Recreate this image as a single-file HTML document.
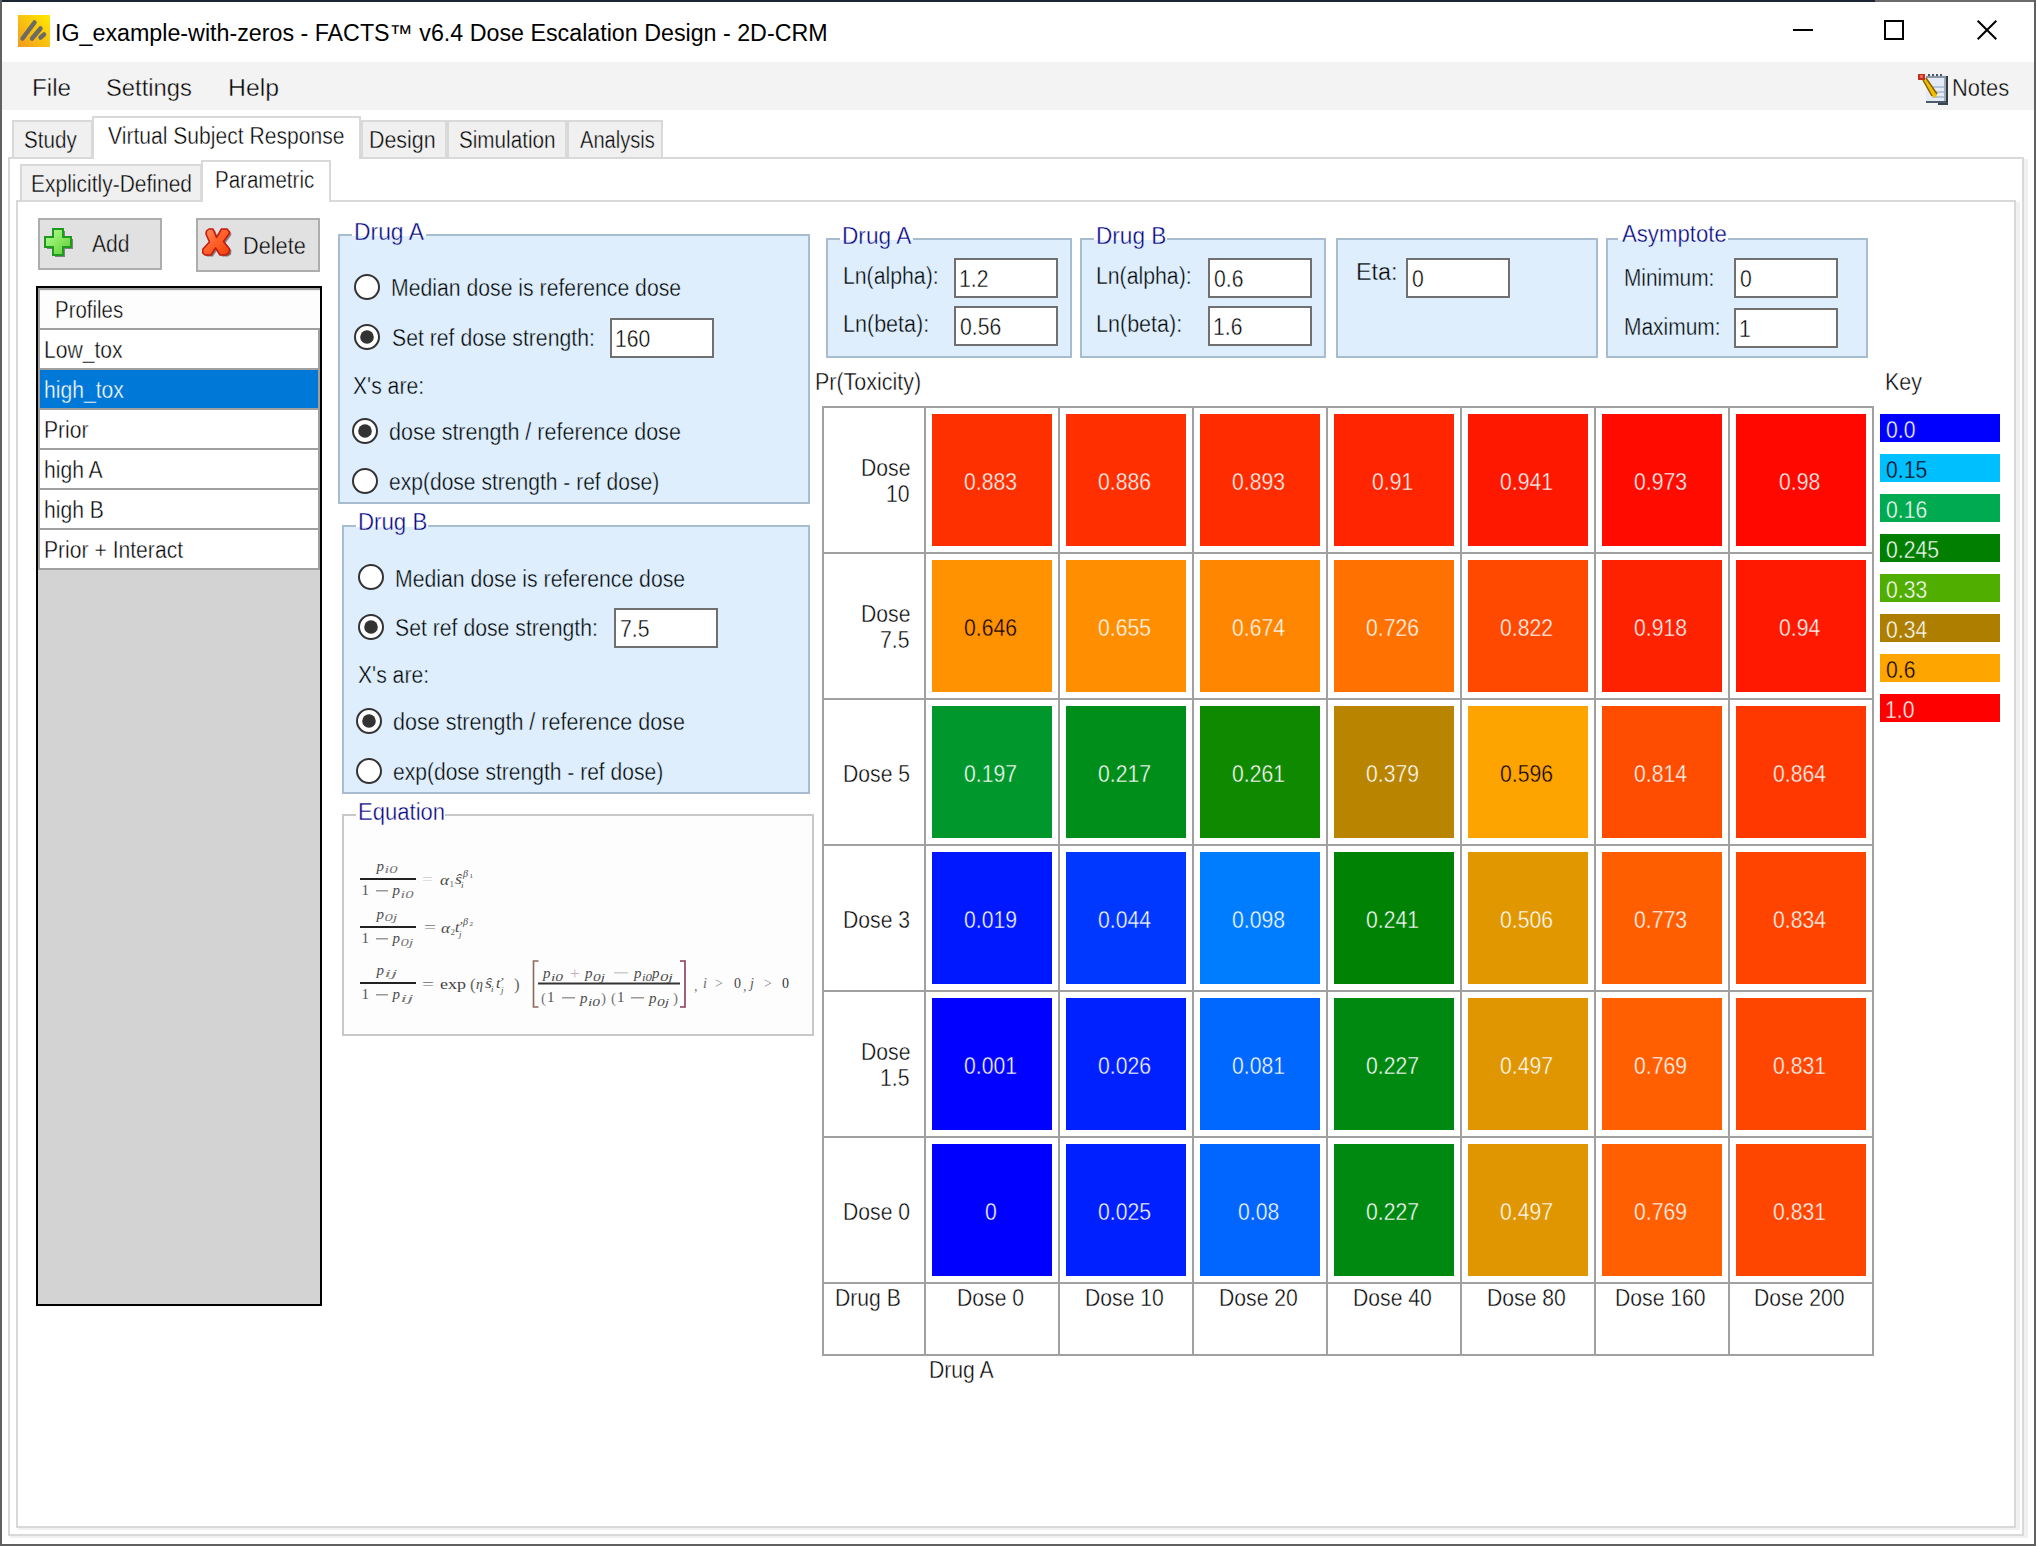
<!DOCTYPE html>
<html><head><meta charset="utf-8"><style>
html,body{margin:0;padding:0;}
body{width:2036px;height:1546px;position:relative;overflow:hidden;background:#fff;font-family:"Liberation Sans",sans-serif;}
.a{position:absolute;}
.t{position:absolute;white-space:pre;transform-origin:0 0;color:#000;}
</style></head><body>
<div class='a' style='left:0px;top:0px;width:2036px;height:2px;background:#1c2534;'></div>
<div class='a' style='left:1875px;top:0px;width:161px;height:2px;background:#6b6b6b;'></div>
<div class='a' style='left:0px;top:0px;width:2px;height:1546px;background:#606060;'></div>
<div class='a' style='left:2034px;top:0px;width:2px;height:1546px;background:#606060;'></div>
<div class='a' style='left:0px;top:1544px;width:2036px;height:2px;background:#606060;'></div>
<svg class='a' style='left:18px;top:15px' width='32' height='32' viewBox='0 0 32 32'>
<defs><linearGradient id='ig' x1='0' y1='1' x2='1' y2='0'><stop offset='0' stop-color='#f39a1e'/><stop offset='1' stop-color='#ffea00'/></linearGradient></defs>
<rect width='32' height='32' fill='url(#ig)'/>
<g stroke='#6b6b62' stroke-width='4.5' stroke-linecap='round'><line x1='4.5' y1='23.5' x2='16.5' y2='7.5'/><line x1='14' y1='23.5' x2='22.5' y2='13.5'/><line x1='22.5' y1='22.5' x2='26' y2='19.5'/></g>
</svg>
<div class='t' style='left:54.56px;top:22px;font-size:23px;line-height:23px;transform:scaleX(1.0108);-webkit-text-stroke:0.4px #fff;-webkit-text-stroke:0;'>IG_example-with-zeros - FACTS™ v6.4 Dose Escalation Design - 2D-CRM</div>
<div class='a' style='left:1793px;top:29px;width:20px;height:2px;background:#000;'></div>
<div class='a' style='left:1884px;top:20px;width:20px;height:20px;border:2px solid #000;box-sizing:border-box;'></div>
<svg class='a' style='left:1976px;top:19px' width='22' height='22' viewBox='0 0 22 22'><g stroke='#000' stroke-width='2'><line x1='1.7' y1='1.7' x2='20.3' y2='20.3'/><line x1='20.3' y1='1.7' x2='1.7' y2='20.3'/></g></svg>
<div class='a' style='left:2px;top:62px;width:2032px;height:48px;background:#f3f3f3;'></div>
<div class='t' style='left:32.01px;top:77px;font-size:23px;line-height:23px;transform:scaleX(1.0533);-webkit-text-stroke:0.4px #f3f3f3;'>File</div>
<div class='t' style='left:106.45px;top:77px;font-size:23px;line-height:23px;transform:scaleX(1.0334);-webkit-text-stroke:0.4px #f3f3f3;'>Settings</div>
<div class='t' style='left:227.96px;top:77px;font-size:23px;line-height:23px;transform:scaleX(1.0791);-webkit-text-stroke:0.4px #f3f3f3;'>Help</div>
<svg class='a' style='left:1916px;top:72px' width='34' height='36' viewBox='0 0 34 36'>
<rect x='10' y='3' width='20' height='28' fill='#e4ebf6'/>
<rect x='30' y='4' width='2' height='28' fill='#2e3a44'/>
<rect x='28' y='4' width='2' height='28' fill='#a0aab4'/>
<rect x='22' y='30' width='10' height='3' fill='#3a4650'/>
<rect x='10' y='29' width='20' height='2' fill='#4a5a66'/>
<g fill='#4a5560'><rect x='12' y='2' width='2' height='3'/><rect x='16' y='2' width='2' height='3'/><rect x='20' y='2' width='2' height='3'/><rect x='24' y='2' width='2' height='3'/></g>
<rect x='10' y='4' width='20' height='2' fill='#8a96a2'/>
<g fill='#b4c4dc'><rect x='16' y='14' width='12' height='2'/><rect x='16' y='19' width='12' height='2'/><rect x='16' y='24' width='12' height='2'/></g>
<path d='M7 8L10 6L21 22L20 26L16 24Z' fill='#f0c000'/>
<path d='M10 6L21 22' stroke='#8a6000' stroke-width='1.5'/>
<path d='M7 8L16 24' stroke='#8a6000' stroke-width='1.5'/>
<rect x='2' y='2' width='7' height='6' fill='#c03020' transform='rotate(0)'/>
<rect x='4' y='3' width='3' height='3' fill='#ff6050'/>
</svg>
<div class='t' style='left:1952.20px;top:77px;font-size:23px;line-height:23px;transform:scaleX(0.9518);-webkit-text-stroke:0.4px #f3f3f3;'>Notes</div>
<div class='a' style='left:8px;top:157px;width:2016px;height:1379px;background:#fff;border:2px solid #d9d9d9;box-sizing:border-box;'></div>
<div class='a' style='left:2024px;top:159px;width:4px;height:1379px;background:#f0f0f0;'></div>
<div class='a' style='left:10px;top:1536px;width:2018px;height:2px;background:#f0f0f0;'></div>
<div class='a' style='left:12px;top:120px;width:81px;height:39px;background:#f0f0f0;border:2px solid #d9d9d9;box-sizing:border-box;'></div>
<div class='t' style='left:24.09px;top:128.5px;font-size:23px;line-height:23px;transform:scaleX(0.8966);-webkit-text-stroke:0.4px #f0f0f0;'>Study</div>
<div class='a' style='left:361px;top:120px;width:86px;height:39px;background:#f0f0f0;border:2px solid #d9d9d9;box-sizing:border-box;'></div>
<div class='t' style='left:368.94px;top:128.5px;font-size:23px;line-height:23px;transform:scaleX(0.9308);-webkit-text-stroke:0.4px #f0f0f0;'>Design</div>
<div class='a' style='left:447px;top:120px;width:120px;height:39px;background:#f0f0f0;border:2px solid #d9d9d9;box-sizing:border-box;'></div>
<div class='t' style='left:459.29px;top:128.5px;font-size:23px;line-height:23px;transform:scaleX(0.8982);-webkit-text-stroke:0.4px #f0f0f0;'>Simulation</div>
<div class='a' style='left:567px;top:120px;width:96px;height:39px;background:#f0f0f0;border:2px solid #d9d9d9;box-sizing:border-box;'></div>
<div class='t' style='left:580.46px;top:128.5px;font-size:23px;line-height:23px;transform:scaleX(0.8729);-webkit-text-stroke:0.4px #f0f0f0;'>Analysis</div>
<div class='a' style='left:92px;top:116px;width:269px;height:43px;background:#fff;border:2px solid #d9d9d9;box-sizing:border-box;border-bottom:none;'></div>
<div class='t' style='left:108.42px;top:124.5px;font-size:23px;line-height:23px;transform:scaleX(0.9173);-webkit-text-stroke:0.4px #fff;'>Virtual Subject Response</div>
<div class='a' style='left:16px;top:200px;width:2000px;height:1328px;background:#fff;border:2px solid #d9d9d9;box-sizing:border-box;'></div>
<div class='a' style='left:2016px;top:202px;width:4px;height:1328px;background:#f0f0f0;'></div>
<div class='a' style='left:18px;top:1528px;width:2002px;height:2px;background:#f0f0f0;'></div>
<div class='a' style='left:20px;top:164px;width:182px;height:38px;background:#f0f0f0;border:2px solid #d9d9d9;box-sizing:border-box;'></div>
<div class='t' style='left:30.68px;top:173px;font-size:23px;line-height:23px;transform:scaleX(0.9130);-webkit-text-stroke:0.4px #f0f0f0;'>Explicitly-Defined</div>
<div class='a' style='left:201px;top:160px;width:130px;height:42px;background:#fff;border:2px solid #d9d9d9;box-sizing:border-box;border-bottom:none;'></div>
<div class='t' style='left:215.32px;top:169px;font-size:23px;line-height:23px;transform:scaleX(0.8924);-webkit-text-stroke:0.4px #fff;'>Parametric</div>
<div class='a' style='left:38px;top:218px;width:124px;height:52px;background:#e1e1e1;border:2px solid #adadad;box-sizing:border-box;'></div>
<svg class='a' style='left:43px;top:227px' width='34' height='34' viewBox='0 0 34 34'>
<defs><linearGradient id='gp' x1='0' y1='0' x2='1' y2='1'><stop offset='0' stop-color='#b8ff98'/><stop offset='0.5' stop-color='#88e860'/><stop offset='1' stop-color='#60c838'/></linearGradient></defs>
<path d='M12 4h10v8h8v10h-8v8h-10v-8h-8v-10h8z' fill='#606060' opacity='0.75'/>
<path d='M10 2h10v8h8v10h-8v8h-10v-8h-8v-10h8z' fill='url(#gp)' stroke='#1e9a1e' stroke-width='2'/>
</svg>
<div class='t' style='left:92.36px;top:233px;font-size:23px;line-height:23px;transform:scaleX(0.9183);-webkit-text-stroke:0.4px #e1e1e1;'>Add</div>
<div class='a' style='left:196px;top:218px;width:124px;height:54px;background:#e1e1e1;border:2px solid #adadad;box-sizing:border-box;'></div>
<svg class='a' style='left:202px;top:228px' width='32' height='32' viewBox='0 0 32 32'>
<defs><linearGradient id='gx' x1='0' y1='0' x2='1' y2='1'><stop offset='0' stop-color='#ff9060'/><stop offset='0.5' stop-color='#ff6028'/><stop offset='1' stop-color='#f04008'/></linearGradient></defs>
<path d='M4.5 3L7 1L11 1L14.5 9.5L19.5 1L25 1L27.5 4L27 6L21.5 13.5L27.5 21L27 25L24 27L18 27L13.5 20L9 27L3 27L0.5 24.5L1 21L7.5 14L4 6Z' fill='#555' opacity='0.7' transform='translate(2,1.5)'/>
<path d='M4.5 3L7 1L11 1L14.5 9.5L19.5 1L25 1L27.5 4L27 6L21.5 13.5L27.5 21L27 25L24 27L18 27L13.5 20L9 27L3 27L0.5 24.5L1 21L7.5 14L4 6Z' fill='url(#gx)' stroke='#c41a10' stroke-width='1.6' stroke-linejoin='round'/>
</svg>
<div class='t' style='left:242.72px;top:235px;font-size:23px;line-height:23px;transform:scaleX(0.9438);-webkit-text-stroke:0.4px #e1e1e1;'>Delete</div>
<div class='a' style='left:36px;top:286px;width:286px;height:1020px;background:#d3d3d3;border:2px solid #000;box-sizing:border-box;'></div>
<div class='a' style='left:38px;top:288px;width:282px;height:2px;background:#a0a0a0;'></div>
<div class='a' style='left:38px;top:288px;width:2px;height:282px;background:#a0a0a0;'></div>
<div class='a' style='left:40px;top:290px;width:280px;height:38px;background:#fdfdfd;'></div>
<div class='a' style='left:40px;top:290px;width:280px;height:1px;background:#f0f0f0;'></div>
<div class='t' style='left:55.32px;top:299px;font-size:23px;line-height:23px;transform:scaleX(0.8882);-webkit-text-stroke:0.4px #fdfdfd;'>Profiles</div>
<div class='a' style='left:40px;top:328px;width:280px;height:2px;background:#a0a0a0;'></div>
<div class='a' style='left:40px;top:330px;width:278px;height:38px;background:#fff;'></div>
<div class='a' style='left:318px;top:330px;width:2px;height:38px;background:#a0a0a0;'></div>
<div class='t' style='left:44.17px;top:339px;font-size:23px;line-height:23px;transform:scaleX(0.9180);-webkit-text-stroke:0.4px #fff;'>Low_tox</div>
<div class='a' style='left:40px;top:368px;width:280px;height:2px;background:#a0a0a0;'></div>
<div class='a' style='left:40px;top:370px;width:278px;height:38px;background:#0078d7;'></div>
<div class='a' style='left:318px;top:370px;width:2px;height:38px;background:#a0a0a0;'></div>
<div class='t' style='left:43.66px;top:379px;font-size:23px;line-height:23px;transform:scaleX(0.9180);color:#fff;-webkit-text-stroke:0.4px #0078d7;'>high_tox</div>
<div class='a' style='left:40px;top:408px;width:280px;height:2px;background:#a0a0a0;'></div>
<div class='a' style='left:40px;top:410px;width:278px;height:38px;background:#fff;'></div>
<div class='a' style='left:318px;top:410px;width:2px;height:38px;background:#a0a0a0;'></div>
<div class='t' style='left:44.17px;top:419px;font-size:23px;line-height:23px;transform:scaleX(0.9180);-webkit-text-stroke:0.4px #fff;'>Prior</div>
<div class='a' style='left:40px;top:448px;width:280px;height:2px;background:#a0a0a0;'></div>
<div class='a' style='left:40px;top:450px;width:278px;height:38px;background:#fff;'></div>
<div class='a' style='left:318px;top:450px;width:2px;height:38px;background:#a0a0a0;'></div>
<div class='t' style='left:43.66px;top:459px;font-size:23px;line-height:23px;transform:scaleX(0.9180);-webkit-text-stroke:0.4px #fff;'>high A</div>
<div class='a' style='left:40px;top:488px;width:280px;height:2px;background:#a0a0a0;'></div>
<div class='a' style='left:40px;top:490px;width:278px;height:38px;background:#fff;'></div>
<div class='a' style='left:318px;top:490px;width:2px;height:38px;background:#a0a0a0;'></div>
<div class='t' style='left:43.66px;top:499px;font-size:23px;line-height:23px;transform:scaleX(0.9180);-webkit-text-stroke:0.4px #fff;'>high B</div>
<div class='a' style='left:40px;top:528px;width:280px;height:2px;background:#a0a0a0;'></div>
<div class='a' style='left:40px;top:530px;width:278px;height:38px;background:#fff;'></div>
<div class='a' style='left:318px;top:530px;width:2px;height:38px;background:#a0a0a0;'></div>
<div class='t' style='left:44.17px;top:539px;font-size:23px;line-height:23px;transform:scaleX(0.9180);-webkit-text-stroke:0.4px #fff;'>Prior + Interact</div>
<div class='a' style='left:40px;top:568px;width:280px;height:2px;background:#a0a0a0;'></div>
<div class='a' style='left:338px;top:234px;width:472px;height:270px;background:#dfeefd;border:2px solid #a8bccf;box-sizing:border-box;'></div>
<div class='a' style='left:351.9px;top:234px;width:74.0px;height:2px;background:#fff;'></div>
<div class='a' style='left:351.9px;top:236px;width:74.0px;height:1px;background:#dfeefd;'></div>
<div class='t' style='left:354.03px;top:221px;font-size:23px;line-height:23px;transform:scaleX(0.9941);color:#000080;-webkit-text-stroke:0.4px #f2f8fe;'>Drug A</div>
<svg class='a' style='left:353px;top:273px' width='28' height='28' viewBox='0 0 28 28'><circle cx='14' cy='14' r='12' fill='#fff' stroke='#333' stroke-width='2'/></svg>
<div class='t' style='left:390.86px;top:277px;font-size:23px;line-height:23px;transform:scaleX(0.9223);-webkit-text-stroke:0.4px #dfeefd;'>Median dose is reference dose</div>
<svg class='a' style='left:353px;top:323px' width='28' height='28' viewBox='0 0 28 28'><circle cx='14' cy='14' r='12' fill='#fff' stroke='#333' stroke-width='2'/><circle cx='14' cy='14' r='6.8' fill='#333'/></svg>
<div class='t' style='left:391.67px;top:327px;font-size:23px;line-height:23px;transform:scaleX(0.9223);-webkit-text-stroke:0.4px #dfeefd;'>Set ref dose strength:</div>
<div class='a' style='left:610px;top:318px;width:104px;height:40px;background:#fff;border:2px solid #707070;box-sizing:border-box;'></div>
<div class='t' style='left:615.39px;top:328.0px;font-size:23px;line-height:23px;transform:scaleX(0.9200);-webkit-text-stroke:0.4px #fff;'>160</div>
<div class='t' style='left:353.33px;top:375px;font-size:23px;line-height:23px;transform:scaleX(0.9200);-webkit-text-stroke:0.4px #dfeefd;'>X's are:</div>
<svg class='a' style='left:351px;top:417px' width='28' height='28' viewBox='0 0 28 28'><circle cx='14' cy='14' r='12' fill='#fff' stroke='#333' stroke-width='2'/><circle cx='14' cy='14' r='6.8' fill='#333'/></svg>
<div class='t' style='left:388.80px;top:421px;font-size:23px;line-height:23px;transform:scaleX(0.9355);-webkit-text-stroke:0.4px #dfeefd;'>dose strength / reference dose</div>
<svg class='a' style='left:351px;top:467px' width='28' height='28' viewBox='0 0 28 28'><circle cx='14' cy='14' r='12' fill='#fff' stroke='#333' stroke-width='2'/></svg>
<div class='t' style='left:388.82px;top:471px;font-size:23px;line-height:23px;transform:scaleX(0.9149);-webkit-text-stroke:0.4px #dfeefd;'>exp(dose strength - ref dose)</div>
<div class='a' style='left:342px;top:525px;width:468px;height:269px;background:#dfeefd;border:2px solid #a8bccf;box-sizing:border-box;'></div>
<div class='a' style='left:355.5px;top:525px;width:72.30000000000001px;height:2px;background:#fff;'></div>
<div class='a' style='left:355.5px;top:527px;width:72.30000000000001px;height:1px;background:#dfeefd;'></div>
<div class='t' style='left:357.68px;top:511px;font-size:23px;line-height:23px;transform:scaleX(0.9673);color:#000080;-webkit-text-stroke:0.4px #f2f8fe;'>Drug B</div>
<svg class='a' style='left:356.5px;top:563.4px' width='28' height='28' viewBox='0 0 28 28'><circle cx='14' cy='14' r='12' fill='#fff' stroke='#333' stroke-width='2'/></svg>
<div class='t' style='left:394.56px;top:567.5px;font-size:23px;line-height:23px;transform:scaleX(0.9223);-webkit-text-stroke:0.4px #dfeefd;'>Median dose is reference dose</div>
<svg class='a' style='left:356.5px;top:613px' width='28' height='28' viewBox='0 0 28 28'><circle cx='14' cy='14' r='12' fill='#fff' stroke='#333' stroke-width='2'/><circle cx='14' cy='14' r='6.8' fill='#333'/></svg>
<div class='t' style='left:395.37px;top:617px;font-size:23px;line-height:23px;transform:scaleX(0.9223);-webkit-text-stroke:0.4px #dfeefd;'>Set ref dose strength:</div>
<div class='a' style='left:614px;top:608px;width:104px;height:40px;background:#fff;border:2px solid #707070;box-sizing:border-box;'></div>
<div class='t' style='left:619.94px;top:618.0px;font-size:23px;line-height:23px;transform:scaleX(0.9200);-webkit-text-stroke:0.4px #fff;'>7.5</div>
<div class='t' style='left:357.53px;top:664px;font-size:23px;line-height:23px;transform:scaleX(0.9200);-webkit-text-stroke:0.4px #dfeefd;'>X's are:</div>
<svg class='a' style='left:354.6px;top:706.5px' width='28' height='28' viewBox='0 0 28 28'><circle cx='14' cy='14' r='12' fill='#fff' stroke='#333' stroke-width='2'/><circle cx='14' cy='14' r='6.8' fill='#333'/></svg>
<div class='t' style='left:392.50px;top:711px;font-size:23px;line-height:23px;transform:scaleX(0.9355);-webkit-text-stroke:0.4px #dfeefd;'>dose strength / reference dose</div>
<svg class='a' style='left:354.6px;top:757px' width='28' height='28' viewBox='0 0 28 28'><circle cx='14' cy='14' r='12' fill='#fff' stroke='#333' stroke-width='2'/></svg>
<div class='t' style='left:392.52px;top:761px;font-size:23px;line-height:23px;transform:scaleX(0.9149);-webkit-text-stroke:0.4px #dfeefd;'>exp(dose strength - ref dose)</div>
<div class='a' style='left:342px;top:814px;width:472px;height:222px;background:#fdfdfd;border:2px solid #c8c8c8;box-sizing:border-box;'></div>
<div class='a' style='left:356px;top:814px;width:89px;height:2px;background:#fff;'></div>
<div class='t' style='left:358.09px;top:801px;font-size:23px;line-height:23px;transform:scaleX(0.9594);color:#000080;-webkit-text-stroke:0.4px #fff;'>Equation</div>
<svg class='a' style='left:344px;top:817px;font-family:"Liberation Serif",serif' width='468' height='217'><rect x='16' y='61' width='56' height='2' fill='#222'/><text x='32.5' y='53.5' font-size='15' style='font-style:italic;' fill='#4a4a4a' text-anchor='start'>p</text><text x='40.5' y='56.0' font-size='10' style='font-style:italic;' fill='#777' text-anchor='start' textLength='13' lengthAdjust='spacingAndGlyphs'>i0</text><text x='17.5' y='78.0' font-size='15' style='' fill='#555' text-anchor='start'>1</text><rect x='32' y='73' width='12' height='1.5' fill='#999'/><text x='48.5' y='78.0' font-size='15' style='font-style:italic;' fill='#4a4a4a' text-anchor='start'>p</text><text x='56.5' y='80.5' font-size='10' style='font-style:italic;' fill='#777' text-anchor='start' textLength='13' lengthAdjust='spacingAndGlyphs'>i0</text><text x='78.0' y='67.0' font-size='15' style='' fill='#ccc' text-anchor='start' textLength='11' lengthAdjust='spacingAndGlyphs'>=</text><text x='96.0' y='67.5' font-size='15' style='font-style:italic;' fill='#4a4a4a' text-anchor='start' textLength='9' lengthAdjust='spacingAndGlyphs'>α</text><text x='105.5' y='70.0' font-size='9' style='' fill='#666' text-anchor='start'>1</text><text x='111.0' y='67.0' font-size='14' style='font-style:italic;' fill='#4a4a4a' text-anchor='start' textLength='7' lengthAdjust='spacingAndGlyphs'>ŝ</text><text x='117.0' y='71.0' font-size='9' style='font-style:italic;' fill='#4a4a4a' text-anchor='start'>i</text><text x='119.0' y='59.5' font-size='10' style='font-style:italic;' fill='#4a4a4a' text-anchor='start'>β</text><text x='125.5' y='61.0' font-size='7' style='' fill='#4a4a4a' text-anchor='start'>1</text><rect x='16' y='109' width='56' height='2' fill='#222'/><text x='32.5' y='101.5' font-size='15' style='font-style:italic;' fill='#4a4a4a' text-anchor='start'>p</text><text x='40.5' y='104.0' font-size='10' style='font-style:italic;' fill='#777' text-anchor='start' textLength='13' lengthAdjust='spacingAndGlyphs'>0j</text><text x='17.5' y='126.0' font-size='15' style='' fill='#555' text-anchor='start'>1</text><rect x='32' y='121' width='12' height='1.5' fill='#999'/><text x='48.5' y='126.0' font-size='15' style='font-style:italic;' fill='#4a4a4a' text-anchor='start'>p</text><text x='56.5' y='128.5' font-size='10' style='font-style:italic;' fill='#777' text-anchor='start' textLength='13' lengthAdjust='spacingAndGlyphs'>0j</text><text x='80.0' y='115.0' font-size='15' style='' fill='#777' text-anchor='start' textLength='12' lengthAdjust='spacingAndGlyphs'>=</text><text x='97.0' y='115.5' font-size='15' style='font-style:italic;' fill='#4a4a4a' text-anchor='start' textLength='9' lengthAdjust='spacingAndGlyphs'>α</text><text x='106.5' y='118.0' font-size='9' style='' fill='#666' text-anchor='start'>2</text><text x='111.0' y='115.0' font-size='14' style='font-style:italic;' fill='#4a4a4a' text-anchor='start' textLength='6' lengthAdjust='spacingAndGlyphs'>ť</text><text x='115.0' y='120.0' font-size='9' style='font-style:italic;' fill='#4a4a4a' text-anchor='start'>j</text><text x='119.0' y='107.5' font-size='10' style='font-style:italic;' fill='#4a4a4a' text-anchor='start'>β</text><text x='125.5' y='109.0' font-size='7' style='' fill='#4a4a4a' text-anchor='start'>2</text><rect x='16' y='165' width='56' height='2' fill='#222'/><text x='32.5' y='157.5' font-size='15' style='font-style:italic;' fill='#4a4a4a' text-anchor='start'>p</text><text x='40.5' y='160.0' font-size='10' style='font-style:italic;' fill='#777' text-anchor='start' textLength='13' lengthAdjust='spacingAndGlyphs'>ij</text><text x='17.5' y='182.0' font-size='15' style='' fill='#555' text-anchor='start'>1</text><rect x='32' y='177' width='12' height='1.5' fill='#999'/><text x='48.5' y='182.0' font-size='15' style='font-style:italic;' fill='#4a4a4a' text-anchor='start'>p</text><text x='56.5' y='184.5' font-size='10' style='font-style:italic;' fill='#777' text-anchor='start' textLength='13' lengthAdjust='spacingAndGlyphs'>ij</text><text x='78.0' y='172.0' font-size='15' style='' fill='#666' text-anchor='start' textLength='12' lengthAdjust='spacingAndGlyphs'>=</text><text x='96.0' y='171.5' font-size='15' style='' fill='#444' text-anchor='start' textLength='26' lengthAdjust='spacingAndGlyphs'>exp</text><text x='126.0' y='173.0' font-size='17' style='' fill='#666' text-anchor='start'>(</text><text x='132.0' y='171.5' font-size='14' style='font-style:italic;' fill='#4a4a4a' text-anchor='start' textLength='7' lengthAdjust='spacingAndGlyphs'>η</text><text x='141.0' y='171.0' font-size='14' style='font-style:italic;' fill='#4a4a4a' text-anchor='start' textLength='7' lengthAdjust='spacingAndGlyphs'>ŝ</text><text x='147.0' y='175.0' font-size='9' style='font-style:italic;' fill='#4a4a4a' text-anchor='start'>i</text><text x='152.0' y='171.0' font-size='14' style='font-style:italic;' fill='#4a4a4a' text-anchor='start' textLength='6' lengthAdjust='spacingAndGlyphs'>ť</text><text x='157.0' y='176.0' font-size='9' style='font-style:italic;' fill='#4a4a4a' text-anchor='start'>j</text><text x='170.0' y='173.0' font-size='17' style='' fill='#666' text-anchor='start'>)</text><path d='M194.5 144 h-5 v46 h5' fill='none' stroke='#8a6a5a' stroke-width='1.6'/><path d='M336 144 h5 v46 h-5' fill='none' stroke='#8a3a5a' stroke-width='1.6'/><rect x='194' y='165.5' width='142' height='2.0' fill='#333'/><text x='199.0' y='161.0' font-size='15' style='font-style:italic;' fill='#4a4a4a' text-anchor='start'>p</text><text x='207.0' y='163.5' font-size='10' style='font-style:italic;' fill='#4a4a4a' text-anchor='start' textLength='12' lengthAdjust='spacingAndGlyphs'>i0</text><text x='226.0' y='162.0' font-size='17' style='' fill='#c4b0b8' text-anchor='start'>+</text><text x='241.0' y='161.0' font-size='15' style='font-style:italic;' fill='#4a4a4a' text-anchor='start'>p</text><text x='249.0' y='163.5' font-size='10' style='font-style:italic;' fill='#4a4a4a' text-anchor='start' textLength='12' lengthAdjust='spacingAndGlyphs'>0j</text><rect x='270' y='155' width='14' height='1.5' fill='#ccc'/><text x='290.0' y='161.0' font-size='15' style='font-style:italic;' fill='#4a4a4a' text-anchor='start'>p</text><text x='298.0' y='163.5' font-size='10' style='font-style:italic;' fill='#4a4a4a' text-anchor='start' textLength='10' lengthAdjust='spacingAndGlyphs'>i0</text><text x='308.0' y='161.0' font-size='15' style='font-style:italic;' fill='#4a4a4a' text-anchor='start'>p</text><text x='316.0' y='163.5' font-size='10' style='font-style:italic;' fill='#4a4a4a' text-anchor='start' textLength='13' lengthAdjust='spacingAndGlyphs'>0j</text><text x='197.0' y='186.0' font-size='15' style='' fill='#777' text-anchor='start'>(</text><text x='203.0' y='185.0' font-size='15' style='' fill='#555' text-anchor='start'>1</text><rect x='218' y='180' width='13' height='1.5' fill='#999'/><text x='236.0' y='186.0' font-size='15' style='font-style:italic;' fill='#4a4a4a' text-anchor='start'>p</text><text x='244.0' y='188.5' font-size='10' style='font-style:italic;' fill='#4a4a4a' text-anchor='start' textLength='12' lengthAdjust='spacingAndGlyphs'>i0</text><text x='257.0' y='186.0' font-size='15' style='' fill='#777' text-anchor='start'>)</text><text x='267.0' y='186.0' font-size='15' style='' fill='#777' text-anchor='start'>(</text><text x='273.0' y='185.0' font-size='15' style='' fill='#555' text-anchor='start'>1</text><rect x='287' y='180' width='13' height='1.5' fill='#999'/><text x='305.0' y='186.0' font-size='15' style='font-style:italic;' fill='#4a4a4a' text-anchor='start'>p</text><text x='313.0' y='188.5' font-size='10' style='font-style:italic;' fill='#4a4a4a' text-anchor='start' textLength='12' lengthAdjust='spacingAndGlyphs'>0j</text><text x='329.0' y='186.0' font-size='15' style='' fill='#777' text-anchor='start'>)</text><text x='350.0' y='174.0' font-size='14' style='' fill='#777' text-anchor='start'>,</text><text x='359.0' y='171.0' font-size='14' style='font-style:italic;' fill='#666' text-anchor='start'>i</text><text x='371.0' y='171.0' font-size='14' style='' fill='#888' text-anchor='start'>&gt;</text><text x='390.0' y='171.0' font-size='14' style='' fill='#444' text-anchor='start'>0</text><text x='399.0' y='174.0' font-size='14' style='' fill='#777' text-anchor='start'>,</text><text x='406.0' y='171.0' font-size='14' style='font-style:italic;' fill='#555' text-anchor='start'>j</text><text x='420.0' y='171.0' font-size='14' style='' fill='#888' text-anchor='start'>&gt;</text><text x='438.0' y='171.0' font-size='14' style='' fill='#333' text-anchor='start'>0</text></svg>
<div class='a' style='left:826px;top:238px;width:246px;height:120px;background:#dfeefd;border:2px solid #a8bccf;box-sizing:border-box;'></div>
<div class='a' style='left:839.9px;top:238px;width:73.39999999999998px;height:2px;background:#fff;'></div>
<div class='a' style='left:839.9px;top:240px;width:73.39999999999998px;height:1px;background:#dfeefd;'></div>
<div class='t' style='left:842.04px;top:225px;font-size:23px;line-height:23px;transform:scaleX(0.9854);color:#000080;-webkit-text-stroke:0.4px #f2f8fe;'>Drug A</div>
<div class='t' style='left:842.96px;top:265px;font-size:23px;line-height:23px;transform:scaleX(0.9234);-webkit-text-stroke:0.4px #dfeefd;'>Ln(alpha):</div>
<div class='a' style='left:954px;top:258px;width:104px;height:40px;background:#fff;border:2px solid #707070;box-sizing:border-box;'></div>
<div class='t' style='left:959.39px;top:268.0px;font-size:23px;line-height:23px;transform:scaleX(0.9200);-webkit-text-stroke:0.4px #fff;'>1.2</div>
<div class='t' style='left:842.93px;top:313px;font-size:23px;line-height:23px;transform:scaleX(0.9365);-webkit-text-stroke:0.4px #dfeefd;'>Ln(beta):</div>
<div class='a' style='left:954px;top:306px;width:104px;height:40px;background:#fff;border:2px solid #707070;box-sizing:border-box;'></div>
<div class='t' style='left:960.20px;top:316.0px;font-size:23px;line-height:23px;transform:scaleX(0.9200);-webkit-text-stroke:0.4px #fff;'>0.56</div>
<div class='a' style='left:1080px;top:238px;width:246px;height:120px;background:#dfeefd;border:2px solid #a8bccf;box-sizing:border-box;'></div>
<div class='a' style='left:1093.5px;top:238px;width:73.40000000000009px;height:2px;background:#fff;'></div>
<div class='a' style='left:1093.5px;top:240px;width:73.40000000000009px;height:1px;background:#dfeefd;'></div>
<div class='t' style='left:1095.65px;top:225px;font-size:23px;line-height:23px;transform:scaleX(0.9834);color:#000080;-webkit-text-stroke:0.4px #f2f8fe;'>Drug B</div>
<div class='t' style='left:1096.46px;top:265px;font-size:23px;line-height:23px;transform:scaleX(0.9234);-webkit-text-stroke:0.4px #dfeefd;'>Ln(alpha):</div>
<div class='a' style='left:1208px;top:258px;width:104px;height:40px;background:#fff;border:2px solid #707070;box-sizing:border-box;'></div>
<div class='t' style='left:1214.20px;top:268.0px;font-size:23px;line-height:23px;transform:scaleX(0.9200);-webkit-text-stroke:0.4px #fff;'>0.6</div>
<div class='t' style='left:1096.43px;top:313px;font-size:23px;line-height:23px;transform:scaleX(0.9365);-webkit-text-stroke:0.4px #dfeefd;'>Ln(beta):</div>
<div class='a' style='left:1208px;top:306px;width:104px;height:40px;background:#fff;border:2px solid #707070;box-sizing:border-box;'></div>
<div class='t' style='left:1213.39px;top:316.0px;font-size:23px;line-height:23px;transform:scaleX(0.9200);-webkit-text-stroke:0.4px #fff;'>1.6</div>
<div class='a' style='left:1336px;top:238px;width:262px;height:120px;background:#dfeefd;border:2px solid #a8bccf;box-sizing:border-box;'></div>
<div class='t' style='left:1356.08px;top:261px;font-size:23px;line-height:23px;transform:scaleX(1.0167);-webkit-text-stroke:0.4px #dfeefd;'>Eta:</div>
<div class='a' style='left:1406px;top:258px;width:104px;height:40px;background:#fff;border:2px solid #707070;box-sizing:border-box;'></div>
<div class='t' style='left:1412.20px;top:268.0px;font-size:23px;line-height:23px;transform:scaleX(0.9200);-webkit-text-stroke:0.4px #fff;'>0</div>
<div class='a' style='left:1606px;top:238px;width:262px;height:120px;background:#dfeefd;border:2px solid #a8bccf;box-sizing:border-box;'></div>
<div class='a' style='left:1618px;top:238px;width:109.70000000000005px;height:2px;background:#fff;'></div>
<div class='a' style='left:1618px;top:240px;width:109.70000000000005px;height:1px;background:#dfeefd;'></div>
<div class='t' style='left:1621.96px;top:223px;font-size:23px;line-height:23px;transform:scaleX(0.9638);color:#000080;-webkit-text-stroke:0.4px #f2f8fe;'>Asymptote</div>
<div class='t' style='left:1624.29px;top:267px;font-size:23px;line-height:23px;transform:scaleX(0.9068);-webkit-text-stroke:0.4px #dfeefd;'>Minimum:</div>
<div class='a' style='left:1734px;top:258px;width:104px;height:40px;background:#fff;border:2px solid #707070;box-sizing:border-box;'></div>
<div class='t' style='left:1740.20px;top:268.0px;font-size:23px;line-height:23px;transform:scaleX(0.9200);-webkit-text-stroke:0.4px #fff;'>0</div>
<div class='t' style='left:1624.28px;top:316px;font-size:23px;line-height:23px;transform:scaleX(0.9107);-webkit-text-stroke:0.4px #dfeefd;'>Maximum:</div>
<div class='a' style='left:1734px;top:308px;width:104px;height:40px;background:#fff;border:2px solid #707070;box-sizing:border-box;'></div>
<div class='t' style='left:1739.39px;top:318.0px;font-size:23px;line-height:23px;transform:scaleX(0.9200);-webkit-text-stroke:0.4px #fff;'>1</div>
<div class='t' style='left:814.74px;top:371px;font-size:23px;line-height:23px;transform:scaleX(0.9326);-webkit-text-stroke:0.4px #fff;'>Pr(Toxicity)</div>
<div class='t' style='left:1885.24px;top:371px;font-size:23px;line-height:23px;transform:scaleX(0.9332);-webkit-text-stroke:0.4px #fff;'>Key</div>
<div class='a' style='left:822px;top:406px;width:1052px;height:950px;background:#fff;'></div>
<div class='a' style='left:822px;top:406px;width:2px;height:950px;background:#a0a0a0;'></div>
<div class='a' style='left:924px;top:406px;width:2px;height:950px;background:#a0a0a0;'></div>
<div class='a' style='left:1058px;top:406px;width:2px;height:950px;background:#a0a0a0;'></div>
<div class='a' style='left:1192px;top:406px;width:2px;height:950px;background:#a0a0a0;'></div>
<div class='a' style='left:1326px;top:406px;width:2px;height:950px;background:#a0a0a0;'></div>
<div class='a' style='left:1460px;top:406px;width:2px;height:950px;background:#a0a0a0;'></div>
<div class='a' style='left:1594px;top:406px;width:2px;height:950px;background:#a0a0a0;'></div>
<div class='a' style='left:1728px;top:406px;width:2px;height:950px;background:#a0a0a0;'></div>
<div class='a' style='left:1872px;top:406px;width:2px;height:950px;background:#a0a0a0;'></div>
<div class='a' style='left:822px;top:406px;width:1052px;height:2px;background:#a0a0a0;'></div>
<div class='a' style='left:822px;top:552px;width:1052px;height:2px;background:#a0a0a0;'></div>
<div class='a' style='left:822px;top:698px;width:1052px;height:2px;background:#a0a0a0;'></div>
<div class='a' style='left:822px;top:844px;width:1052px;height:2px;background:#a0a0a0;'></div>
<div class='a' style='left:822px;top:990px;width:1052px;height:2px;background:#a0a0a0;'></div>
<div class='a' style='left:822px;top:1136px;width:1052px;height:2px;background:#a0a0a0;'></div>
<div class='a' style='left:822px;top:1282px;width:1052px;height:2px;background:#a0a0a0;'></div>
<div class='a' style='left:822px;top:1354px;width:1052px;height:2px;background:#a0a0a0;'></div>
<div class='t' style='left:860.54px;top:456.5px;font-size:23px;line-height:23px;transform:scaleX(0.9200);-webkit-text-stroke:0.4px #fff;'>Dose</div>
<div class='t' style='left:886.27px;top:482.5px;font-size:23px;line-height:23px;transform:scaleX(0.9200);-webkit-text-stroke:0.4px #fff;'>10</div>
<div class='a' style='left:932px;top:414px;width:120px;height:132px;background:#ff3000;'></div>
<div class='t' style='left:964.07px;top:470.5px;font-size:23px;line-height:23px;transform:scaleX(0.9200);color:#fff;-webkit-text-stroke:0.4px #ff3000;'>0.883</div>
<div class='a' style='left:1066px;top:414px;width:120px;height:132px;background:#ff2f00;'></div>
<div class='t' style='left:1098.07px;top:470.5px;font-size:23px;line-height:23px;transform:scaleX(0.9200);color:#fff;-webkit-text-stroke:0.4px #ff2f00;'>0.886</div>
<div class='a' style='left:1200px;top:414px;width:120px;height:132px;background:#ff2c00;'></div>
<div class='t' style='left:1232.07px;top:470.5px;font-size:23px;line-height:23px;transform:scaleX(0.9200);color:#fff;-webkit-text-stroke:0.4px #ff2c00;'>0.893</div>
<div class='a' style='left:1334px;top:414px;width:120px;height:132px;background:#ff2500;'></div>
<div class='t' style='left:1372.02px;top:470.5px;font-size:23px;line-height:23px;transform:scaleX(0.9200);color:#fff;-webkit-text-stroke:0.4px #ff2500;'>0.91</div>
<div class='a' style='left:1468px;top:414px;width:120px;height:132px;background:#ff1800;'></div>
<div class='t' style='left:1500.13px;top:470.5px;font-size:23px;line-height:23px;transform:scaleX(0.9200);color:#fff;-webkit-text-stroke:0.4px #ff1800;'>0.941</div>
<div class='a' style='left:1602px;top:414px;width:120px;height:132px;background:#ff0b00;'></div>
<div class='t' style='left:1634.07px;top:470.5px;font-size:23px;line-height:23px;transform:scaleX(0.9200);color:#fff;-webkit-text-stroke:0.4px #ff0b00;'>0.973</div>
<div class='a' style='left:1736px;top:414px;width:130px;height:132px;background:#ff0800;'></div>
<div class='t' style='left:1778.95px;top:470.5px;font-size:23px;line-height:23px;transform:scaleX(0.9200);color:#fff;-webkit-text-stroke:0.4px #ff0800;'>0.98</div>
<div class='t' style='left:860.54px;top:602.5px;font-size:23px;line-height:23px;transform:scaleX(0.9200);-webkit-text-stroke:0.4px #fff;'>Dose</div>
<div class='t' style='left:880.43px;top:628.5px;font-size:23px;line-height:23px;transform:scaleX(0.9200);-webkit-text-stroke:0.4px #fff;'>7.5</div>
<div class='a' style='left:932px;top:560px;width:120px;height:132px;background:#ff9200;'></div>
<div class='t' style='left:964.07px;top:616.5px;font-size:23px;line-height:23px;transform:scaleX(0.9200);-webkit-text-stroke:0.4px #ff9200;'>0.646</div>
<div class='a' style='left:1066px;top:560px;width:120px;height:132px;background:#ff8e00;'></div>
<div class='t' style='left:1098.05px;top:616.5px;font-size:23px;line-height:23px;transform:scaleX(0.9200);color:#fff;-webkit-text-stroke:0.4px #ff8e00;'>0.655</div>
<div class='a' style='left:1200px;top:560px;width:120px;height:132px;background:#ff8600;'></div>
<div class='t' style='left:1231.92px;top:616.5px;font-size:23px;line-height:23px;transform:scaleX(0.9200);color:#fff;-webkit-text-stroke:0.4px #ff8600;'>0.674</div>
<div class='a' style='left:1334px;top:560px;width:120px;height:132px;background:#ff7100;'></div>
<div class='t' style='left:1366.07px;top:616.5px;font-size:23px;line-height:23px;transform:scaleX(0.9200);color:#fff;-webkit-text-stroke:0.4px #ff7100;'>0.726</div>
<div class='a' style='left:1468px;top:560px;width:120px;height:132px;background:#ff4900;'></div>
<div class='t' style='left:1500.16px;top:616.5px;font-size:23px;line-height:23px;transform:scaleX(0.9200);color:#fff;-webkit-text-stroke:0.4px #ff4900;'>0.822</div>
<div class='a' style='left:1602px;top:560px;width:120px;height:132px;background:#ff2200;'></div>
<div class='t' style='left:1634.07px;top:616.5px;font-size:23px;line-height:23px;transform:scaleX(0.9200);color:#fff;-webkit-text-stroke:0.4px #ff2200;'>0.918</div>
<div class='a' style='left:1736px;top:560px;width:130px;height:132px;background:#ff1900;'></div>
<div class='t' style='left:1778.81px;top:616.5px;font-size:23px;line-height:23px;transform:scaleX(0.9200);color:#fff;-webkit-text-stroke:0.4px #ff1900;'>0.94</div>
<div class='t' style='left:843.01px;top:762.5px;font-size:23px;line-height:23px;transform:scaleX(0.9200);-webkit-text-stroke:0.4px #fff;'>Dose 5</div>
<div class='a' style='left:932px;top:706px;width:120px;height:132px;background:#00982d;'></div>
<div class='t' style='left:964.16px;top:762.5px;font-size:23px;line-height:23px;transform:scaleX(0.9200);color:#fff;-webkit-text-stroke:0.4px #00982d;'>0.197</div>
<div class='a' style='left:1066px;top:706px;width:120px;height:132px;background:#008e1a;'></div>
<div class='t' style='left:1098.16px;top:762.5px;font-size:23px;line-height:23px;transform:scaleX(0.9200);color:#fff;-webkit-text-stroke:0.4px #008e1a;'>0.217</div>
<div class='a' style='left:1200px;top:706px;width:120px;height:132px;background:#0f8900;'></div>
<div class='t' style='left:1232.13px;top:762.5px;font-size:23px;line-height:23px;transform:scaleX(0.9200);color:#fff;-webkit-text-stroke:0.4px #0f8900;'>0.261</div>
<div class='a' style='left:1334px;top:706px;width:120px;height:132px;background:#b98400;'></div>
<div class='t' style='left:1366.11px;top:762.5px;font-size:23px;line-height:23px;transform:scaleX(0.9200);color:#fff;-webkit-text-stroke:0.4px #b98400;'>0.379</div>
<div class='a' style='left:1468px;top:706px;width:120px;height:132px;background:#fea400;'></div>
<div class='t' style='left:1500.07px;top:762.5px;font-size:23px;line-height:23px;transform:scaleX(0.9200);-webkit-text-stroke:0.4px #fea400;'>0.596</div>
<div class='a' style='left:1602px;top:706px;width:120px;height:132px;background:#ff4d00;'></div>
<div class='t' style='left:1633.92px;top:762.5px;font-size:23px;line-height:23px;transform:scaleX(0.9200);color:#fff;-webkit-text-stroke:0.4px #ff4d00;'>0.814</div>
<div class='a' style='left:1736px;top:706px;width:130px;height:132px;background:#ff3800;'></div>
<div class='t' style='left:1772.92px;top:762.5px;font-size:23px;line-height:23px;transform:scaleX(0.9200);color:#fff;-webkit-text-stroke:0.4px #ff3800;'>0.864</div>
<div class='t' style='left:843.05px;top:908.5px;font-size:23px;line-height:23px;transform:scaleX(0.9200);-webkit-text-stroke:0.4px #fff;'>Dose 3</div>
<div class='a' style='left:932px;top:852px;width:120px;height:132px;background:#0018ff;'></div>
<div class='t' style='left:964.11px;top:908.5px;font-size:23px;line-height:23px;transform:scaleX(0.9200);color:#fff;-webkit-text-stroke:0.4px #0018ff;'>0.019</div>
<div class='a' style='left:1066px;top:852px;width:120px;height:132px;background:#0038ff;'></div>
<div class='t' style='left:1097.92px;top:908.5px;font-size:23px;line-height:23px;transform:scaleX(0.9200);color:#fff;-webkit-text-stroke:0.4px #0038ff;'>0.044</div>
<div class='a' style='left:1200px;top:852px;width:120px;height:132px;background:#007dff;'></div>
<div class='t' style='left:1232.07px;top:908.5px;font-size:23px;line-height:23px;transform:scaleX(0.9200);color:#fff;-webkit-text-stroke:0.4px #007dff;'>0.098</div>
<div class='a' style='left:1334px;top:852px;width:120px;height:132px;background:#008204;'></div>
<div class='t' style='left:1366.13px;top:908.5px;font-size:23px;line-height:23px;transform:scaleX(0.9200);color:#fff;-webkit-text-stroke:0.4px #008204;'>0.241</div>
<div class='a' style='left:1468px;top:852px;width:120px;height:132px;background:#e19700;'></div>
<div class='t' style='left:1500.07px;top:908.5px;font-size:23px;line-height:23px;transform:scaleX(0.9200);color:#fff;-webkit-text-stroke:0.4px #e19700;'>0.506</div>
<div class='a' style='left:1602px;top:852px;width:120px;height:132px;background:#ff5e00;'></div>
<div class='t' style='left:1634.07px;top:908.5px;font-size:23px;line-height:23px;transform:scaleX(0.9200);color:#fff;-webkit-text-stroke:0.4px #ff5e00;'>0.773</div>
<div class='a' style='left:1736px;top:852px;width:130px;height:132px;background:#ff4400;'></div>
<div class='t' style='left:1772.92px;top:908.5px;font-size:23px;line-height:23px;transform:scaleX(0.9200);color:#fff;-webkit-text-stroke:0.4px #ff4400;'>0.834</div>
<div class='t' style='left:860.54px;top:1040.5px;font-size:23px;line-height:23px;transform:scaleX(0.9200);-webkit-text-stroke:0.4px #fff;'>Dose</div>
<div class='t' style='left:880.43px;top:1066.5px;font-size:23px;line-height:23px;transform:scaleX(0.9200);-webkit-text-stroke:0.4px #fff;'>1.5</div>
<div class='a' style='left:932px;top:998px;width:120px;height:132px;background:#0001ff;'></div>
<div class='t' style='left:964.13px;top:1054.5px;font-size:23px;line-height:23px;transform:scaleX(0.9200);color:#fff;-webkit-text-stroke:0.4px #0001ff;'>0.001</div>
<div class='a' style='left:1066px;top:998px;width:120px;height:132px;background:#0021ff;'></div>
<div class='t' style='left:1098.07px;top:1054.5px;font-size:23px;line-height:23px;transform:scaleX(0.9200);color:#fff;-webkit-text-stroke:0.4px #0021ff;'>0.026</div>
<div class='a' style='left:1200px;top:998px;width:120px;height:132px;background:#0067ff;'></div>
<div class='t' style='left:1232.13px;top:1054.5px;font-size:23px;line-height:23px;transform:scaleX(0.9200);color:#fff;-webkit-text-stroke:0.4px #0067ff;'>0.081</div>
<div class='a' style='left:1334px;top:998px;width:120px;height:132px;background:#008911;'></div>
<div class='t' style='left:1366.16px;top:1054.5px;font-size:23px;line-height:23px;transform:scaleX(0.9200);color:#fff;-webkit-text-stroke:0.4px #008911;'>0.227</div>
<div class='a' style='left:1468px;top:998px;width:120px;height:132px;background:#df9600;'></div>
<div class='t' style='left:1500.16px;top:1054.5px;font-size:23px;line-height:23px;transform:scaleX(0.9200);color:#fff;-webkit-text-stroke:0.4px #df9600;'>0.497</div>
<div class='a' style='left:1602px;top:998px;width:120px;height:132px;background:#ff5f00;'></div>
<div class='t' style='left:1634.11px;top:1054.5px;font-size:23px;line-height:23px;transform:scaleX(0.9200);color:#fff;-webkit-text-stroke:0.4px #ff5f00;'>0.769</div>
<div class='a' style='left:1736px;top:998px;width:130px;height:132px;background:#ff4600;'></div>
<div class='t' style='left:1773.13px;top:1054.5px;font-size:23px;line-height:23px;transform:scaleX(0.9200);color:#fff;-webkit-text-stroke:0.4px #ff4600;'>0.831</div>
<div class='t' style='left:842.97px;top:1200.5px;font-size:23px;line-height:23px;transform:scaleX(0.9200);-webkit-text-stroke:0.4px #fff;'>Dose 0</div>
<div class='a' style='left:932px;top:1144px;width:120px;height:132px;background:#0000ff;'></div>
<div class='t' style='left:984.62px;top:1200.5px;font-size:23px;line-height:23px;transform:scaleX(0.9200);color:#fff;-webkit-text-stroke:0.4px #0000ff;'>0</div>
<div class='a' style='left:1066px;top:1144px;width:120px;height:132px;background:#0020ff;'></div>
<div class='t' style='left:1098.05px;top:1200.5px;font-size:23px;line-height:23px;transform:scaleX(0.9200);color:#fff;-webkit-text-stroke:0.4px #0020ff;'>0.025</div>
<div class='a' style='left:1200px;top:1144px;width:120px;height:132px;background:#0066ff;'></div>
<div class='t' style='left:1237.95px;top:1200.5px;font-size:23px;line-height:23px;transform:scaleX(0.9200);color:#fff;-webkit-text-stroke:0.4px #0066ff;'>0.08</div>
<div class='a' style='left:1334px;top:1144px;width:120px;height:132px;background:#008911;'></div>
<div class='t' style='left:1366.16px;top:1200.5px;font-size:23px;line-height:23px;transform:scaleX(0.9200);color:#fff;-webkit-text-stroke:0.4px #008911;'>0.227</div>
<div class='a' style='left:1468px;top:1144px;width:120px;height:132px;background:#df9600;'></div>
<div class='t' style='left:1500.16px;top:1200.5px;font-size:23px;line-height:23px;transform:scaleX(0.9200);color:#fff;-webkit-text-stroke:0.4px #df9600;'>0.497</div>
<div class='a' style='left:1602px;top:1144px;width:120px;height:132px;background:#ff5f00;'></div>
<div class='t' style='left:1634.11px;top:1200.5px;font-size:23px;line-height:23px;transform:scaleX(0.9200);color:#fff;-webkit-text-stroke:0.4px #ff5f00;'>0.769</div>
<div class='a' style='left:1736px;top:1144px;width:130px;height:132px;background:#ff4600;'></div>
<div class='t' style='left:1773.13px;top:1200.5px;font-size:23px;line-height:23px;transform:scaleX(0.9200);color:#fff;-webkit-text-stroke:0.4px #ff4600;'>0.831</div>
<div class='t' style='left:834.76px;top:1287px;font-size:23px;line-height:23px;transform:scaleX(0.9200);-webkit-text-stroke:0.4px #fff;'>Drug B</div>
<div class='t' style='left:956.52px;top:1287px;font-size:23px;line-height:23px;transform:scaleX(0.9200);-webkit-text-stroke:0.4px #fff;'>Dose 0</div>
<div class='t' style='left:1084.63px;top:1287px;font-size:23px;line-height:23px;transform:scaleX(0.9200);-webkit-text-stroke:0.4px #fff;'>Dose 10</div>
<div class='t' style='left:1218.63px;top:1287px;font-size:23px;line-height:23px;transform:scaleX(0.9200);-webkit-text-stroke:0.4px #fff;'>Dose 20</div>
<div class='t' style='left:1352.63px;top:1287px;font-size:23px;line-height:23px;transform:scaleX(0.9200);-webkit-text-stroke:0.4px #fff;'>Dose 40</div>
<div class='t' style='left:1486.63px;top:1287px;font-size:23px;line-height:23px;transform:scaleX(0.9200);-webkit-text-stroke:0.4px #fff;'>Dose 80</div>
<div class='t' style='left:1614.75px;top:1287px;font-size:23px;line-height:23px;transform:scaleX(0.9200);-webkit-text-stroke:0.4px #fff;'>Dose 160</div>
<div class='t' style='left:1753.75px;top:1287px;font-size:23px;line-height:23px;transform:scaleX(0.9200);-webkit-text-stroke:0.4px #fff;'>Dose 200</div>
<div class='t' style='left:929.06px;top:1358.5px;font-size:23px;line-height:23px;transform:scaleX(0.9200);-webkit-text-stroke:0.4px #fff;'>Drug A</div>
<div class='a' style='left:1880px;top:414px;width:120px;height:28px;background:#0000ff;'></div>
<div class='t' style='left:1885.60px;top:419px;font-size:23px;line-height:23px;transform:scaleX(0.9200);color:#fff;-webkit-text-stroke:0.4px #0000ff;'>0.0</div>
<div class='a' style='left:1880px;top:454px;width:120px;height:28px;background:#00bfff;'></div>
<div class='t' style='left:1885.60px;top:459px;font-size:23px;line-height:23px;transform:scaleX(0.9200);-webkit-text-stroke:0.4px #00bfff;'>0.15</div>
<div class='a' style='left:1880px;top:494px;width:120px;height:28px;background:#00aa50;'></div>
<div class='t' style='left:1885.60px;top:499px;font-size:23px;line-height:23px;transform:scaleX(0.9200);color:#fff;-webkit-text-stroke:0.4px #00aa50;'>0.16</div>
<div class='a' style='left:1880px;top:534px;width:120px;height:28px;background:#007f00;'></div>
<div class='t' style='left:1885.60px;top:539px;font-size:23px;line-height:23px;transform:scaleX(0.9200);color:#fff;-webkit-text-stroke:0.4px #007f00;'>0.245</div>
<div class='a' style='left:1880px;top:574px;width:120px;height:28px;background:#50ae00;'></div>
<div class='t' style='left:1885.60px;top:579px;font-size:23px;line-height:23px;transform:scaleX(0.9200);color:#fff;-webkit-text-stroke:0.4px #50ae00;'>0.33</div>
<div class='a' style='left:1880px;top:614px;width:120px;height:28px;background:#ad7e00;'></div>
<div class='t' style='left:1885.60px;top:619px;font-size:23px;line-height:23px;transform:scaleX(0.9200);color:#fff;-webkit-text-stroke:0.4px #ad7e00;'>0.34</div>
<div class='a' style='left:1880px;top:654px;width:120px;height:28px;background:#ffa500;'></div>
<div class='t' style='left:1885.60px;top:659px;font-size:23px;line-height:23px;transform:scaleX(0.9200);-webkit-text-stroke:0.4px #ffa500;'>0.6</div>
<div class='a' style='left:1880px;top:694px;width:120px;height:28px;background:#ff0000;'></div>
<div class='t' style='left:1884.79px;top:699px;font-size:23px;line-height:23px;transform:scaleX(0.9200);color:#fff;-webkit-text-stroke:0.4px #ff0000;'>1.0</div>
</body></html>
